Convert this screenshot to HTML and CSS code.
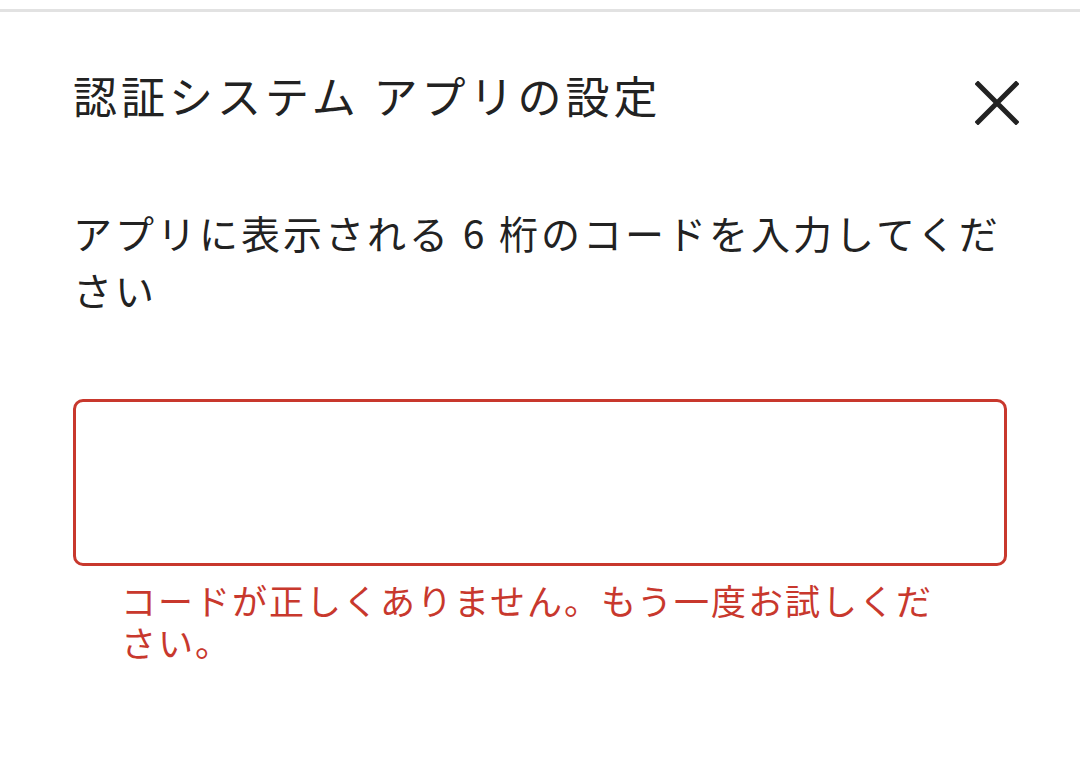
FILE: index.html
```html
<!DOCTYPE html>
<html lang="ja">
<head>
<meta charset="utf-8">
<link rel="stylesheet" href="styles.css">
</head>
<body>
<div class="topline"></div>
<div class="dialog">
  <div class="header">
    <h1 class="title">認証システム アプリの設定</h1>
    <button class="close" aria-label="閉じる">
      <svg width="44" height="44" viewBox="0 0 44 44"><path d="M3 3 L41 41 M41 3 L3 41" stroke="#222" stroke-width="5" stroke-linecap="square" fill="none"/></svg>
    </button>
  </div>
  <p class="desc">アプリに表示される 6 桁のコードを入力してください</p>
  <div class="field">
    <input class="code" type="text" aria-label="コード">
  </div>
  <p class="error">コードが正しくありません。もう一度お試しください。</p>
</div>
</body>
</html>
```
FILE: styles.css
```css
html, body {
  margin: 0;
  padding: 0;
  background: #fff;
}
body {
  font-family: "Noto Sans CJK JP", "Noto Sans", sans-serif;
  color: #222;
}
.topline {
  margin-top: 9px;
  height: 3px;
  background: #e2e2e2;
}
.dialog {
  padding: 0 73px;
}
.header {
  display: flex;
  align-items: center;
  justify-content: space-between;
  margin-top: 50px;
  height: 66px;
}
.title {
  margin: 0;
  font-size: 44px;
  font-weight: 400;
  line-height: 66px;
  letter-spacing: 4px;
  color: #222;
}
.close {
  border: 0;
  background: none;
  padding: 0;
  margin-right: -12px;
  width: 44px;
  height: 44px;
  display: flex;
  align-items: center;
  justify-content: center;
  margin-top: 16px;
}
.desc {
  margin: 76px 0 0;
  font-size: 39px;
  line-height: 57px;
  letter-spacing: 3px;
  color: #222;
}
.field {
  margin-top: 81px;
}
.code {
  display: block;
  box-sizing: border-box;
  width: 100%;
  height: 167px;
  border: 3px solid #c8382d;
  border-radius: 10px;
  background: #fff;
  outline: none;
}
.error {
  margin: 13px 0 0;
  padding: 0 67px 0 48px;
  font-size: 35px;
  line-height: 42px;
  letter-spacing: 2px;
  color: #c8382d;
}
```
